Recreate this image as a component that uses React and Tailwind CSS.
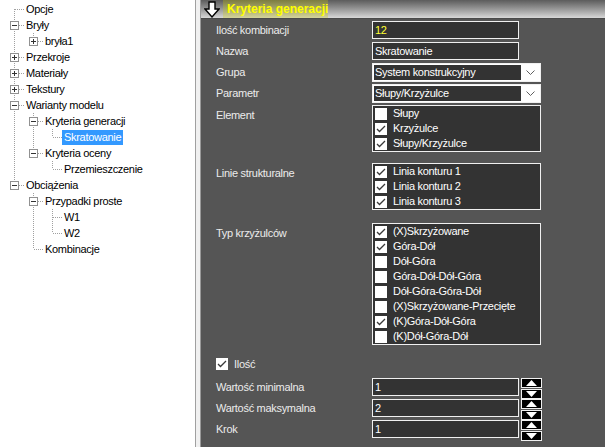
import React from 'react';

// tree rows: level, expander box, guides for ancestor columns, first/last sibling flags
const treeRows = [
  { label: 'Opcje', level: 0, first: true },
  { label: 'Bryły', level: 0, box: '-' },
  { label: 'bryła1', level: 1, box: '+', guides: [true], last: true },
  { label: 'Przekroje', level: 0, box: '+' },
  { label: 'Materiały', level: 0, box: '+' },
  { label: 'Tekstury', level: 0, box: '+' },
  { label: 'Warianty modelu', level: 0, box: '-' },
  { label: 'Kryteria generacji', level: 1, box: '-', guides: [true] },
  { label: 'Skratowanie', level: 2, guides: [true, true], last: true, selected: true },
  { label: 'Kryteria oceny', level: 1, box: '-', guides: [true], last: true },
  { label: 'Przemieszczenie', level: 2, guides: [true, false], last: true },
  { label: 'Obciążenia', level: 0, box: '-', last: true },
  { label: 'Przypadki proste', level: 1, box: '-', guides: [false] },
  { label: 'W1', level: 2, guides: [false, true] },
  { label: 'W2', level: 2, guides: [false, true], last: true },
  { label: 'Kombinacje', level: 1, guides: [false], last: true },
];

const DOT = '#a0a0a0';

const GuideCell = ({ on }) => (
  <svg width="19" height="16" className="shrink-0" shapeRendering="crispEdges">
    {on && <line x1="9.5" y1="0" x2="9.5" y2="16" stroke={DOT} strokeDasharray="1 1" />}
  </svg>
);

const NodeCell = ({ box, first, last }) => (
  <svg width="19" height="16" className="shrink-0" shapeRendering="crispEdges">
    {!first && <line x1="9.5" y1="0" x2="9.5" y2="8" stroke={DOT} strokeDasharray="1 1" />}
    {!last && <line x1="9.5" y1="8" x2="9.5" y2="16" stroke={DOT} strokeDasharray="1 1" />}
    <line x1="10" y1="8.5" x2="19" y2="8.5" stroke={DOT} strokeDasharray="1 1" />
    {box && (
      <g>
        <rect x="5.5" y="4.5" width="8" height="8" fill="#fff" stroke="#919191" />
        <line x1="7" y1="8.5" x2="12" y2="8.5" stroke="#333" />
        {box === '+' && <line x1="9.5" y1="6" x2="9.5" y2="11" stroke="#333" />}
      </g>
    )}
  </svg>
);

const TreeRow = ({ row }) => (
  <div className="flex items-center h-[16px]">
    {(row.guides || []).map((g, i) => (
      <GuideCell key={i} on={g} />
    ))}
    <NodeCell box={row.box} first={row.first} last={row.last} />
    <span
      className={`px-[2px] leading-[15px] whitespace-nowrap ${
        row.selected ? 'bg-[#3399ff] text-white' : 'text-black'
      }`}
    >
      {row.label}
    </span>
  </div>
);

const Check = ({ on }) => (
  <span className="w-[12px] h-[12px] bg-white shrink-0 flex items-center justify-center">
    {on && (
      <svg width="12" height="12" viewBox="0 0 12 12">
        <polyline points="2,6 4.5,8.5 10,3" fill="none" stroke="#3a3a3a" strokeWidth="1.3" />
      </svg>
    )}
  </span>
);

const ListBox = ({ items }) => (
  <div className="w-[169px] border border-[#f0f0f0] bg-[#333333]">
    {items.map(([text, on]) => (
      <div key={text} className="flex items-center h-[15px] pl-[2px] gap-[6px] text-white">
        <Check on={on} />
        <span className="whitespace-nowrap">{text}</span>
      </div>
    ))}
  </div>
);

const TextBox = ({ value, yellow }) => (
  <div
    className={`w-[147px] h-[18px] border border-[#f0f0f0] bg-[#333333] pl-[2px] flex items-center ${
      yellow ? 'text-[#ffff33]' : 'text-white'
    }`}
  >
    {value}
  </div>
);

const Select = ({ value }) => (
  <div className="w-[169px] h-[19px] border border-[#f0f0f0] bg-white flex">
    <div className="flex-1 bg-[#333333] m-[1px] mr-0 pl-[1px] flex items-center text-white">{value}</div>
    <div className="w-[19px] flex items-center justify-center">
      <svg width="9" height="6" viewBox="0 0 9 6">
        <polyline points="0.5,0.5 4.5,4.5 8.5,0.5" fill="none" stroke="#606060" strokeWidth="1" />
      </svg>
    </div>
  </div>
);

const SpinBtn = ({ up }) => (
  <div className="w-[21px] h-[10px] bg-black border border-[#f0f0f0] flex items-center justify-center">
    <svg width="11" height="6" viewBox="0 0 11 6">
      <polygon points={up ? '5.5,0 11,6 0,6' : '0,0 11,0 5.5,6'} fill="#fff" />
    </svg>
  </div>
);

const Label = ({ children, top }) => (
  <div className={`w-[156px] shrink-0 text-[#ececec] whitespace-nowrap ${top ? 'pt-[3px] leading-[15px]' : ''}`}>
    {children}
  </div>
);

const SpinRow = ({ label, value }) => (
  <div className="flex items-center h-[18px]">
    <Label>{label}</Label>
    <TextBox value={value} />
    <div className="ml-[2px] flex flex-col gap-[1px] mt-[3px]">
      <SpinBtn up />
      <SpinBtn />
    </div>
  </div>
);

export default function App() {
  return (
    <div className="flex w-[605px] h-[447px] overflow-hidden font-['Liberation_Sans',Arial,sans-serif] text-[11px] tracking-[-0.3px]">
      <div className="w-[196px] shrink-0 bg-white border-r border-[#a0a0a0] pt-[1px] pl-[5px]">
        {treeRows.map((r) => (
          <TreeRow key={r.label} row={r} />
        ))}
      </div>
      <div className="w-[5px] shrink-0 bg-[#f0f0f0] border-r border-[#9a9a9a]" />
      <div className="flex-1 bg-[#555555] flex flex-col">
        <div className="h-[19px] flex items-stretch bg-gradient-to-b from-[#5c5c5c] to-[#d8d8d8] border-b border-[#4a4a4a]">
          <div className="w-[22px] flex items-center justify-center">
            <svg width="16" height="17" viewBox="0 0 16 17">
              <polygon
                points="5,1 11,1 11,8 15,8 8,16 1,8 5,8"
                fill="#fff"
                stroke="#000"
                strokeWidth="1.4"
                strokeLinejoin="miter"
              />
            </svg>
          </div>
          <div className="w-[105px] flex items-center pl-[4px] bg-gradient-to-b from-[#7c7c40] to-[#d4d49a] text-[#ffff00] font-bold text-[12px] tracking-normal whitespace-nowrap">
            Kryteria generacji
          </div>
        </div>

        <div className="pl-[15px] flex flex-col">
          <div className="flex items-center h-[18px] mt-[2px]">
            <Label>Ilość kombinacji</Label>
            <TextBox value="12" yellow />
          </div>
          <div className="flex items-center h-[18px] mt-[3px]">
            <Label>Nazwa</Label>
            <TextBox value="Skratowanie" />
          </div>
          <div className="flex items-center h-[19px] mt-[3px]">
            <Label>Grupa</Label>
            <Select value="System konstrukcyjny" />
          </div>
          <div className="flex items-center h-[19px] mt-[2px]">
            <Label>Parametr</Label>
            <Select value="Słupy/Krzyżulce" />
          </div>
          <div className="flex items-start mt-[2px]">
            <Label top>Element</Label>
            <ListBox items={[['Słupy', false], ['Krzyżulce', true], ['Słupy/Krzyżulce', true]]} />
          </div>
          <div className="flex items-start mt-[11px]">
            <Label top>Linie strukturalne</Label>
            <ListBox items={[['Linia konturu 1', true], ['Linia konturu 2', true], ['Linia konturu 3', true]]} />
          </div>
          <div className="flex items-start mt-[13px]">
            <Label top>Typ krzyżulców</Label>
            <ListBox
              items={[
                ['(X)Skrzyżowane', true],
                ['Góra-Dół', true],
                ['Dół-Góra', false],
                ['Góra-Dół-Dół-Góra', false],
                ['Dół-Góra-Góra-Dół', false],
                ['(X)Skrzyżowane-Przecięte', false],
                ['(K)Góra-Dół-Góra', true],
                ['(K)Dół-Góra-Dół', false],
              ]}
            />
          </div>
          <div className="flex items-center gap-[6px] h-[14px] mt-[12px] text-[#ececec]">
            <Check on />
            <span>Ilość</span>
          </div>
          <div className="flex flex-col gap-[3px] mt-[7px]">
            <SpinRow label="Wartość minimalna" value="1" />
            <SpinRow label="Wartość maksymalna" value="2" />
            <SpinRow label="Krok" value="1" />
          </div>
        </div>
      </div>
    </div>
  );
}
